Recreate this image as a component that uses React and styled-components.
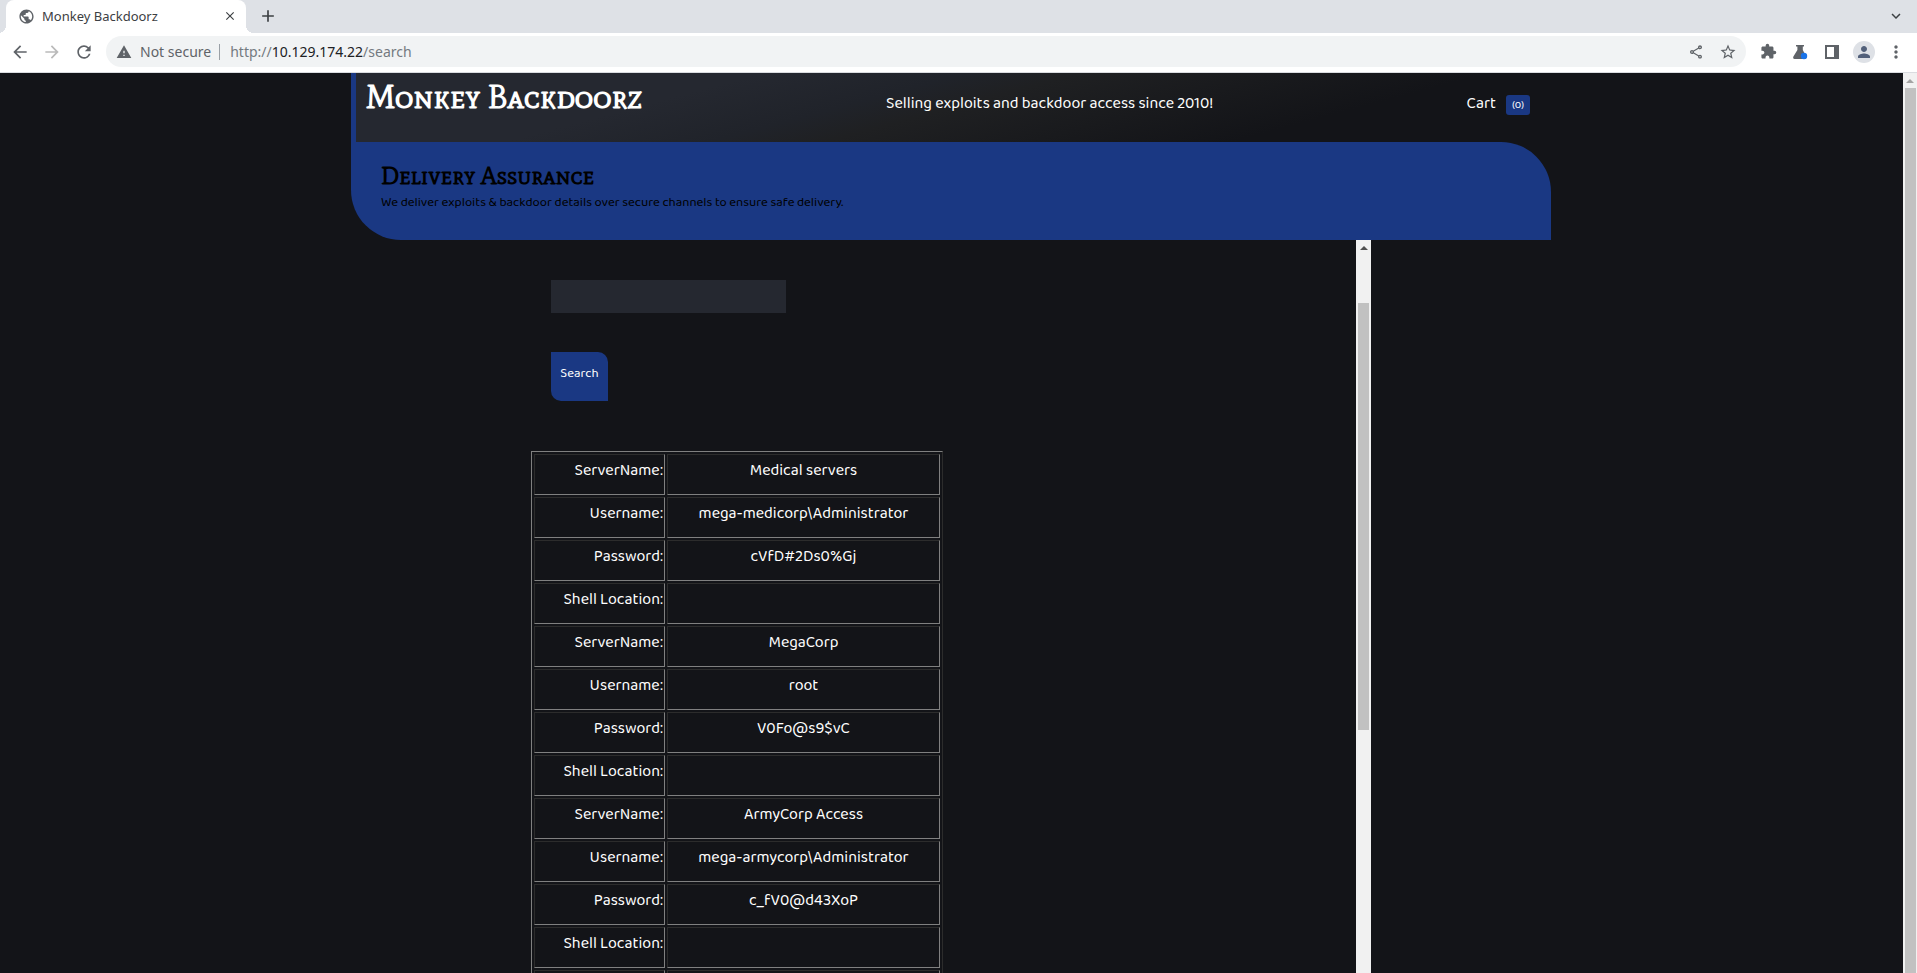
import React from 'react';
import styled, { createGlobalStyle } from 'styled-components';
import {
  MdArrowBack, MdArrowForward, MdRefresh, MdWarning, MdOutlineShare, MdStarOutline,
  MdExtension, MdPerson, MdMoreVert, MdPublic, MdClose, MdAdd, MdExpandMore,
} from 'react-icons/md';

const blue = '#1a3883';
const dark = '#131418';
const slate = '#252830';
const bodyFont = '"Baloo 2", Roboto, sans-serif';
const headFont = '"Mate SC", "DejaVu Serif Condensed", serif';

const GlobalStyle = createGlobalStyle`
  *, *::before, *::after { box-sizing: border-box; }
  body { margin: 0; background: ${dark}; }
  button { border: 0; margin: 0; padding: 0; background: none; font: inherit; color: inherit; }
`;

const Browser = styled.div`
  height: 100vh;
  display: flex;
  flex-direction: column;
  overflow: hidden;
  font-family: "Noto Sans", sans-serif;
`;

const TabStrip = styled.div`
  display: flex;
  align-items: stretch;
  height: 33px;
  padding: 0 10px 0 6px;
  background: #dee1e6;
  color: #3c4043;
`;

const Tab = styled.div`
  position: relative;
  display: flex;
  align-items: center;
  width: 240px;
  padding: 0 8px 1px 12px;
  background: #fff;
  border-radius: 8px 8px 0 0;
  font-size: 13px;
  &::before, &::after {
    content: "";
    position: absolute;
    bottom: 0;
    width: 8px;
    height: 8px;
  }
  &::before { left: -8px; background: radial-gradient(circle at 0 0, transparent 8px, #fff 8px); }
  &::after { right: -8px; background: radial-gradient(circle at 100% 0, transparent 8px, #fff 8px); }
`;

const TabTitle = styled.span`
  flex: 1;
  margin-left: 7px;
  white-space: nowrap;
`;

const IconButton = styled.button`
  display: flex;
  align-items: center;
  justify-content: center;
  flex: none;
  width: ${(p) => p.$w || 32}px;
  height: 32px;
  color: ${(p) => p.$color || '#5f6368'};
`;

const NewTab = styled(IconButton)`
  margin: 0 auto 0 11px;
  color: #3c4043;
`;

const Toolbar = styled.div`
  display: flex;
  align-items: center;
  height: 40px;
  padding: 0 5px 2px 4px;
  background: #fff;
  border-bottom: 1px solid #dadce0;
`;

const Omnibox = styled.div`
  display: flex;
  align-items: center;
  flex: 1;
  height: 31px;
  margin: 0 6px;
  padding: 0 2px 0 10px;
  border-radius: 16px;
  background: #f1f3f4;
  color: #5f6368;
  font-size: 14px;
`;

const Security = styled.span`
  margin-left: 8px;
  padding-right: 8px;
  border-right: 1px solid #9aa0a6;
  line-height: 16px;
`;

const Address = styled.span`
  flex: 1;
  margin-left: 10px;
  color: #747a80;
  b { font-weight: 400; color: #202124; }
`;

const Avatar = styled.span`
  display: flex;
  align-items: center;
  justify-content: center;
  width: 22px;
  height: 22px;
  border-radius: 50%;
  background: #dee1e6;
  color: #52607a;
`;

const Viewport = styled.div`
  flex: 1;
  min-height: 0;
  display: flex;
  background: ${dark};
`;

const Page = styled.div`
  flex: 1;
  min-width: 0;
  display: flex;
  flex-direction: column;
  align-items: center;
  padding-right: 1px;
  overflow: hidden;
  color: #fff;
  font-family: ${bodyFont};
  font-size: 16px;
`;

const Track = styled.div`
  flex: none;
  display: flex;
  flex-direction: column;
  align-items: center;
  width: ${(p) => p.$w}px;
  background: #f1f1f1;
`;

const Arrow = styled.svg`
  flex: none;
  width: 14px;
  height: 15px;
  fill: ${(p) => p.$color};
`;

const Thumb = styled.div`
  flex: ${(p) => p.$flex};
  width: 11px;
  margin-top: ${(p) => p.$top}px;
  background: #c1c1c1;
`;

const Site = styled.div`
  flex: 1;
  min-height: 0;
  display: flex;
  flex-direction: column;
  width: 100%;
  max-width: 1200px;
`;

const Header = styled.header`
  flex: none;
  display: flex;
  align-items: baseline;
  height: 69px;
  padding: 8px 21px 0 10px;
  border-left: 5px solid ${blue};
  background: linear-gradient(165deg, ${slate} 28%, #20232a 42%, #1f2022 50%, ${dark} 78%);
`;

const SiteTitle = styled.h1`
  flex: 0 0 520px;
  margin: 0;
  font: bold 32px/32px ${headFont};
  font-variant: small-caps;
`;

const Tagline = styled.p`
  flex: 1;
  margin: 0;
`;

const Cart = styled.a`
  display: flex;
  align-items: baseline;
  gap: 10px;
  color: #fff;
  text-decoration: none;
`;

const CartCount = styled.span`
  width: 24px;
  border-radius: 3px;
  background: ${blue};
  font-size: 11px;
  line-height: 20px;
  text-align: center;
`;

const Banner = styled.section`
  flex: none;
  padding: 22px 30px 29px;
  border-radius: 0 50px 0 50px;
  background: ${blue};
  color: #000;
`;

const BannerTitle = styled.h2`
  margin: 0 0 7px;
  font: bold 24px/24px ${headFont};
  font-variant: small-caps;
`;

const BannerText = styled.p`
  margin: 0;
  font-size: 13px;
  line-height: 16px;
`;

const Pane = styled.div`
  flex: 1;
  min-height: 0;
  display: flex;
  width: 70%;
  margin: 0 15%;
`;

const Results = styled.main`
  flex: 1;
  min-width: 0;
  overflow: hidden;
`;

const SearchForm = styled.form`
  display: flex;
  flex-direction: column;
  align-items: flex-start;
  gap: 39px;
  padding: 40px 20px 50px;
`;

const SearchField = styled.input`
  width: 235px;
  height: 33px;
  padding: 0 8px;
  border: 0;
  background: ${slate};
  color: #fff;
  font: 16px ${bodyFont};
`;

const SearchButton = styled.button`
  && {
    min-width: 57px;
    height: 49px;
    padding: 0 9px 6px;
    border-radius: 0 10px 0 10px;
    background: ${blue};
    color: #fff;
    font-size: 13px;
  }
`;

const Table = styled.table`
  table-layout: fixed;
  width: 412px;
  border: 1px solid;
  border-color: #808080 #2c2c2c #2c2c2c #808080;
  border-spacing: 2px;
`;

const cell = `
  padding: 4px 1px 11px;
  border: 1px solid;
  border-color: #2c2c2c #808080 #808080 #2c2c2c;
  font-weight: 400;
  line-height: 24px;
  height: 41px;
`;

const LabelCell = styled.th`
  ${cell}
  width: 131px;
  text-align: right;
`;

const ValueCell = styled.td`
  ${cell}
  text-align: center;
`;

const rows = [
  ['ServerName:', 'Medical servers'],
  ['Username:', 'mega-medicorp\\Administrator'],
  ['Password:', 'cVfD#2Ds0%Gj'],
  ['Shell Location:', ''],
  ['ServerName:', 'MegaCorp'],
  ['Username:', 'root'],
  ['Password:', 'V0Fo@s9$vC'],
  ['Shell Location:', ''],
  ['ServerName:', 'ArmyCorp Access'],
  ['Username:', 'mega-armycorp\\Administrator'],
  ['Password:', 'c_fV0@d43XoP'],
  ['Shell Location:', ''],
  ['', ''],
];

function FlaskIcon() {
  return (
    <svg width="16" height="16" viewBox="0 0 16 16" aria-hidden="true">
      <path fill="#5f6368" d="M4 1h8v1.600h-1.200V6l3.400 6.400c.6 1.200 0 2.600-1.400 2.600H2.600C1.200 15 .8 13.800 1.400 12.600L5.400 6V2.600H4z" />
      <circle cx="12" cy="12" r="3.200" fill="#1a73e8" />
    </svg>
  );
}

function SidePanelIcon() {
  return (
    <svg width="14" height="14" viewBox="0 0 14 14" aria-hidden="true">
      <path fill="#5f6368" fillRule="evenodd" d="M0 0h14v14H0zM2 2v10h7V2z" />
    </svg>
  );
}

function Scrollbar({ width, arrow, top, flex }) {
  return (
    <Track $w={width}>
      <Arrow viewBox="0 0 14 15" $color={arrow} aria-hidden="true">
        <path d="M3 10h8L7 6z" />
      </Arrow>
      <Thumb $top={top} $flex={flex} />
    </Track>
  );
}

export default function App() {
  return (
    <Browser>
      <GlobalStyle />
      <TabStrip>
        <Tab>
          <MdPublic size={17} color="#5f6368" />
          <TabTitle>Monkey Backdoorz</TabTitle>
          <IconButton $w={16} $color="#3c4043" aria-label="Close tab"><MdClose size={14} /></IconButton>
        </Tab>
        <NewTab $w={22} aria-label="New tab"><MdAdd size={20} /></NewTab>
        <IconButton $w={22} $color="#3c4043" aria-label="Search tabs"><MdExpandMore size={18} /></IconButton>
      </TabStrip>
      <Toolbar>
        <IconButton aria-label="Back"><MdArrowBack size={20} /></IconButton>
        <IconButton $color="#bababa" aria-label="Forward"><MdArrowForward size={20} /></IconButton>
        <IconButton aria-label="Reload"><MdRefresh size={20} /></IconButton>
        <Omnibox>
          <MdWarning size={16} />
          <Security>Not secure</Security>
          <Address>http://<b>10.129.174.22</b>/search</Address>
          <IconButton aria-label="Share"><MdOutlineShare size={16} /></IconButton>
          <IconButton aria-label="Bookmark"><MdStarOutline size={18} /></IconButton>
        </Omnibox>
        <IconButton aria-label="Extensions"><MdExtension size={17} /></IconButton>
        <IconButton aria-label="Experiments"><FlaskIcon /></IconButton>
        <IconButton aria-label="Side panel"><SidePanelIcon /></IconButton>
        <IconButton aria-label="Profile"><Avatar><MdPerson size={18} /></Avatar></IconButton>
        <IconButton aria-label="Menu"><MdMoreVert size={20} /></IconButton>
      </Toolbar>
      <Viewport>
        <Page>
          <Site>
            <Header>
              <SiteTitle>Monkey Backdoorz</SiteTitle>
              <Tagline>Selling exploits and backdoor access since 2010!</Tagline>
              <Cart href="#cart">Cart <CartCount>(0)</CartCount></Cart>
            </Header>
            <Banner>
              <BannerTitle>Delivery Assurance</BannerTitle>
              <BannerText>We deliver exploits &amp; backdoor details over secure channels to ensure safe delivery.</BannerText>
            </Banner>
            <Pane>
              <Results>
                <SearchForm onSubmit={(e) => e.preventDefault()}>
                  <SearchField type="text" aria-label="Search" />
                  <SearchButton type="submit">Search</SearchButton>
                </SearchForm>
                <Table>
                  <tbody>
                    {rows.map(([label, value], i) => (
                      <tr key={i}>
                        <LabelCell scope="row">{label}</LabelCell>
                        <ValueCell>{value}</ValueCell>
                      </tr>
                    ))}
                  </tbody>
                </Table>
              </Results>
              <Scrollbar width={15} arrow="#505050" top={48} flex="0 0 427px" />
            </Pane>
          </Site>
        </Page>
        <Scrollbar width={14} arrow="#a3a3a3" top={0} flex="1" />
      </Viewport>
    </Browser>
  );
}
